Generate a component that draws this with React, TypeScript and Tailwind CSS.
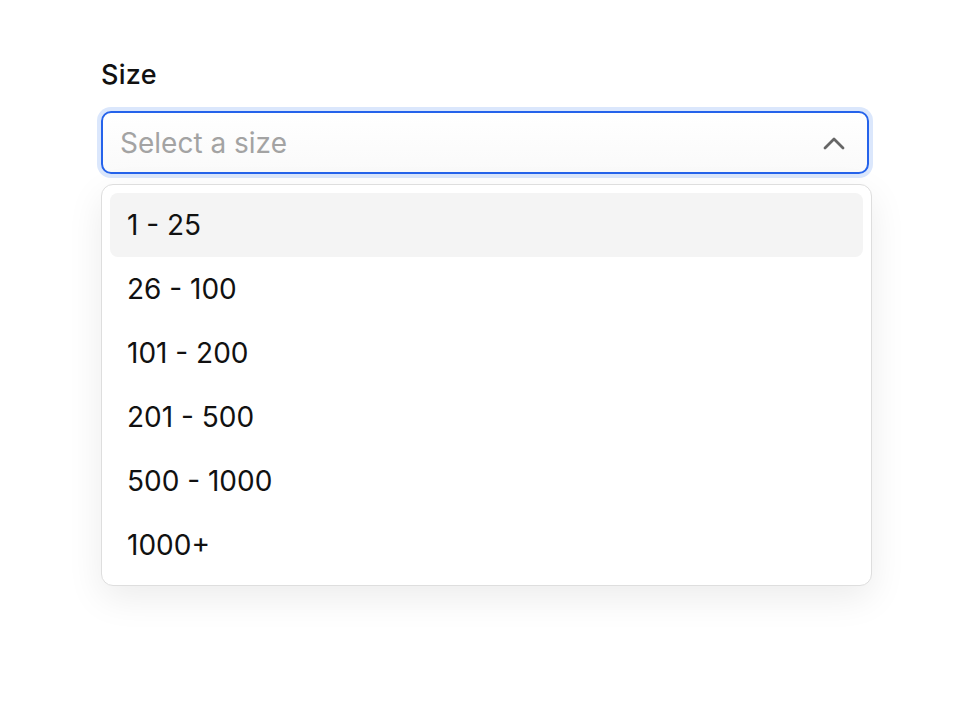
import { useState } from "react";

const sizes = ["1 - 25", "26 - 100", "101 - 200", "201 - 500", "500 - 1000", "1000+"];

export default function App() {
  const [active, setActive] = useState(0);

  return (
    <div
      className="min-h-screen bg-white pt-[59px] pl-[101px] text-[#111111]"
      style={{ fontFamily: "Inter, 'Noto Sans', sans-serif" }}
    >
      <label className="block text-[27px] leading-[32px] font-medium tracking-[0.01em]">Size</label>

      {/* Trigger */}
      <button
        className="mt-[20px] flex h-[63px] w-[768px] items-center justify-between rounded-[10px] border-2 border-[#2563eb] bg-gradient-to-b from-white to-[#fafafa] pl-[17px] pr-[22px] shadow-[0_0_0_4px_#dbe7fc] outline-none"
      >
        <span className="text-[28px] leading-none text-[#a3a3a3]">Select a size</span>
        <svg width="22" height="14" viewBox="0 0 22 14" fill="none">
          <path
            d="M2 12 L11 3 L20 12"
            stroke="#666666"
            strokeWidth="2.8"
            strokeLinecap="round"
            strokeLinejoin="round"
          />
        </svg>
      </button>

      {/* Menu */}
      <div className="mt-[10px] w-[771px] rounded-[12px] border border-[#dedede] bg-white p-[8px] shadow-[0_12px_36px_rgba(0,0,0,0.08)]">
        {sizes.map((s, i) => (
          <div
            key={s}
            onMouseEnter={() => setActive(i)}
            className={
              "flex h-[64px] items-center rounded-[8px] pl-[17px] text-[28px] leading-none " +
              (i === active ? "bg-[#f4f4f4]" : "")
            }
          >
            {s}
          </div>
        ))}
      </div>
    </div>
  );
}
